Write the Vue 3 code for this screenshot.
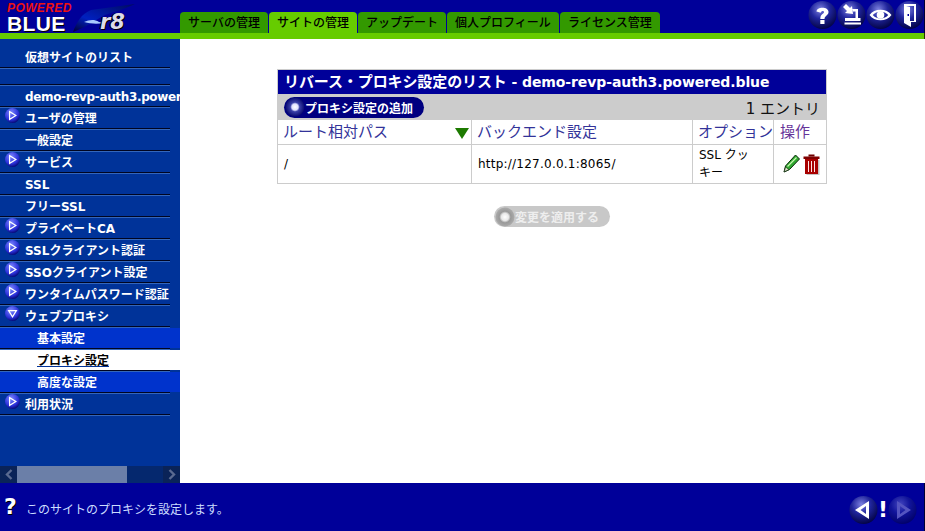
<script setup>
const rows = [
  { label: '仮想サイトのリスト', cls: 'first' },
  { label: '', cls: 'blank' },
  { label: 'demo-revp-auth3.powered.blue', cls: 'demo' },
  { label: 'ユーザの管理', arrow: 'r' },
  { label: '一般設定' },
  { label: 'サービス', arrow: 'r' },
  { label: 'SSL' },
  { label: 'フリーSSL' },
  { label: 'プライベートCA', arrow: 'r' },
  { label: 'SSLクライアント認証', arrow: 'r' },
  { label: 'SSOクライアント設定', arrow: 'r' },
  { label: 'ワンタイムパスワード認証', arrow: 'r' },
  { label: 'ウェブプロキシ', arrow: 'd' },
  { label: '基本設定', cls: 'sub' },
  { label: 'プロキシ設定', cls: 'sub sel' },
  { label: '高度な設定', cls: 'sub' },
  { label: '利用状況', arrow: 'r' },
]
const tabs = [
  { label: 'サーバの管理', w: 88 },
  { label: 'サイトの管理', w: 88, active: true },
  { label: 'アップデート', w: 88 },
  { label: '個人プロフィール', w: 112 },
  { label: 'ライセンス管理', w: 100 },
]
</script>

<template>
  <div class="page">
    <svg class="defs" width="0" height="0" aria-hidden="true">
      <defs>
        <radialGradient id="orb" cx="0.42" cy="0.3" r="0.75">
          <stop offset="0" stop-color="#7c80e0" />
          <stop offset="0.45" stop-color="#20259c" />
          <stop offset="1" stop-color="#00003c" />
        </radialGradient>
        <radialGradient id="mini" cx="0.4" cy="0.3" r="0.75">
          <stop offset="0" stop-color="#7c88ff" />
          <stop offset="0.65" stop-color="#2a30d8" />
          <stop offset="1" stop-color="#000066" />
        </radialGradient>
        <radialGradient id="btn" cx="0.5" cy="0.5" r="0.55">
          <stop offset="0" stop-color="#ffffff" />
          <stop offset="0.3" stop-color="#dfe0ff" />
          <stop offset="0.45" stop-color="#3a40a8" />
          <stop offset="1" stop-color="#000066" />
        </radialGradient>
        <radialGradient id="btnoff" cx="0.5" cy="0.5" r="0.55">
          <stop offset="0" stop-color="#ffffff" />
          <stop offset="0.35" stop-color="#e8e8e8" />
          <stop offset="0.55" stop-color="#999999" />
          <stop offset="1" stop-color="#b0b0b0" />
        </radialGradient>
        <linearGradient id="sw" x1="0" y1="1" x2="1" y2="0">
          <stop offset="0" stop-color="#000033" />
          <stop offset="0.35" stop-color="#0020c0" />
          <stop offset="1" stop-color="#000a60" />
        </linearGradient>
      </defs>
    </svg>

    <header class="top">
      <div class="logo">
        <div class="brand">
          <span class="powered">POWERED</span>
          <span class="blue">BLUE</span>
        </div>
        <svg class="swoosh" width="64" height="31" viewBox="0 0 64 31">
          <path d="M0 30 C4 20 8 12 18 8 L62 2 C50 8 40 10 32 13 C22 18 12 26 0 30Z" fill="url(#sw)" />
          <path d="M11 20 C16 18 21 17 26 20 L31 21 C25 22 18 22 11 20Z" fill="#a8c8ff" />
        </svg>
        <span class="r8">r8</span>
      </div>
      <nav class="tabs">
        <div v-for="t in tabs" :key="t.label" class="tab" :class="{ on: t.active }" :style="{ width: t.w + 'px' }">{{ t.label }}</div>
      </nav>
      <div class="tools">
        <svg width="29" height="30" viewBox="0 0 29 30">
          <circle cx="14.5" cy="15" r="14" fill="url(#orb)" />
          <path d="M8.5 11.5 C8.5 6.5 20.5 6 20.5 12 C20.5 15.5 16.5 15.5 16.5 19 H12.3 C12.3 13.5 16 14 16 12 C16 10.3 13 10.5 12.8 12.8Z" fill="#fff" />
          <rect x="12.3" y="20" width="4.2" height="4" fill="#fff" />
        </svg>
        <svg width="29" height="30" viewBox="0 0 29 30">
          <circle cx="14.5" cy="15" r="14" fill="url(#orb)" />
          <path d="M9 4 L13 8 L15 6 L16 14 L8 13 L10 11 L6 7Z" fill="#fff" />
          <path d="M15 9 H21 V18 H23.5 V21 H8 V18 H18.5 V11.5 H16Z" fill="#fff" />
          <rect x="7.5" y="22.5" width="16.5" height="2" fill="#fff" />
        </svg>
        <svg width="29" height="30" viewBox="0 0 29 30">
          <circle cx="14.5" cy="15" r="14" fill="url(#orb)" />
          <path d="M3.5 15 C8 8 21 8 25.5 15 C21 22 8 22 3.5 15Z M6.8 15 C10 19.5 19 19.5 22.2 15 C19 10.5 10 10.5 6.8 15Z" fill="#fff" fill-rule="evenodd" />
          <circle cx="14.5" cy="15" r="3.8" fill="#fff" />
        </svg>
        <svg width="29" height="30" viewBox="0 0 29 30">
          <circle cx="14.5" cy="15" r="14" fill="url(#orb)" />
          <path d="M9 4 H21 V22 H16 V27 L9 23Z M11 6 L15 7 V21 H19 V6Z" fill="#fff" fill-rule="evenodd" />
          <rect x="12.5" y="14" width="1.5" height="2" fill="#000099" />
        </svg>
      </div>
    </header>
    <div class="stripe"></div>

    <div class="main">
      <aside class="side">
        <div class="menu">
          <div v-for="(r, i) in rows" :key="i" class="row" :class="r.cls">
            <svg v-if="r.arrow" class="mini" width="15" height="15" viewBox="0 0 15 15">
              <circle cx="7.5" cy="7.5" r="7.5" fill="url(#mini)" />
              <path v-if="r.arrow === 'r'" d="M4 2.5 L12 7.5 L4 12.5Z M5.2 4.8 V10.2 L9.8 7.5Z" fill="#fff" fill-rule="evenodd" />
              <path v-else d="M2.5 4 H12.5 L7.5 12Z M4.8 5.2 L7.5 9.8 L10.2 5.2Z" fill="#fff" fill-rule="evenodd" />
            </svg>
            <span class="lbl">{{ r.label }}</span>
          </div>
        </div>
        <div class="scroll">
          <div class="sb"><svg width="8" height="11" viewBox="0 0 8 11"><path d="M6.5 1 L2 5.5 L6.5 10" fill="none" stroke="#5a6a90" stroke-width="2.4" /></svg></div>
          <div class="thumb"></div>
          <div class="track"></div>
          <div class="sb"><svg width="8" height="11" viewBox="0 0 8 11"><path d="M1.5 1 L6 5.5 L1.5 10" fill="none" stroke="#5a6a90" stroke-width="2.4" /></svg></div>
        </div>
      </aside>

      <main class="content">
        <div class="panel">
          <div class="title"><span class="jp">リバース・プロキシ設定のリスト</span> - demo-revp-auth3.powered.blue</div>
          <div class="bar">
            <button class="add">
              <svg width="20" height="20" viewBox="0 0 20 20"><circle cx="10" cy="10" r="9.5" fill="url(#btn)" /></svg>
              <span>プロキシ設定の追加</span>
            </button>
            <span class="count">1 エントリ</span>
          </div>
          <div class="grid">
            <div class="hd c1">
              <span>ルート相対パス</span>
              <svg width="14" height="11" viewBox="0 0 14 11"><path d="M0 0 H14 L7 11Z" fill="#1d7a00" /></svg>
            </div>
            <div class="hd">バックエンド設定</div>
            <div class="hd">オプション</div>
            <div class="hd op">操作</div>
            <div class="td">/</div>
            <div class="td url">http://127.0.0.1:8065/</div>
            <div class="td opt">SSL クッキー</div>
            <div class="td acts">
              <svg width="17" height="20" viewBox="0 0 17 20">
                <path d="M2 18 L5 16.5 L3 14.5Z" fill="#c8c8c8" />
                <path d="M12.5 1 L16.5 5 L6.5 15.5 L1 18 L2.5 12Z" fill="#30a830" stroke="#082808" stroke-width="1" />
                <path d="M4.5 12.5 L13.5 3.5" stroke="#c8f8b0" stroke-width="1.3" />
                <path d="M1.2 17.8 L2.6 13 L6 15.6Z" fill="#e8e8d0" stroke="#082808" stroke-width="0.6" />
              </svg>
              <svg width="17" height="21" viewBox="0 0 17 21">
                <rect x="3.5" y="6" width="13" height="15" fill="#c4c4c4" />
                <rect x="2" y="5" width="13" height="15" fill="#a80000" />
                <rect x="0.5" y="2.5" width="16" height="2.5" fill="#800000" />
                <rect x="5.5" y="0.5" width="6" height="2" fill="#700000" />
                <path d="M5.5 7 V18 M8.5 7 V18 M11.5 7 V18" stroke="#ffe4e4" stroke-width="1" />
              </svg>
            </div>
          </div>
        </div>
        <div class="apply">
          <svg width="20" height="20" viewBox="0 0 20 20"><circle cx="10" cy="10" r="9.5" fill="url(#btnoff)" /></svg>
          <span>変更を適用する</span>
        </div>
      </main>
    </div>

    <footer class="foot">
      <span class="q">?</span>
      <span class="msg">このサイトのプロキシを設定します。</span>
      <div class="nav">
        <svg width="29" height="30" viewBox="0 0 29 30">
          <circle cx="14.5" cy="15" r="14" fill="url(#orb)" />
          <path d="M20 6 V24 L6 15Z M17 11 L11.5 15 L17 19Z" fill="#fff" fill-rule="evenodd" />
        </svg>
        <span class="bang">!</span>
        <svg width="29" height="30" viewBox="0 0 29 30" opacity="0.55">
          <circle cx="14.5" cy="15" r="14" fill="url(#orb)" />
          <path d="M9 6 V24 L23 15Z M12 11 L17.5 15 L12 19Z" fill="#9a9ae0" fill-rule="evenodd" />
        </svg>
      </div>
    </footer>
  </div>
</template>

<style>
html, body { margin: 0; padding: 0; }
</style>

<style scoped>
.page {
  width: 925px; height: 531px; display: flex; flex-direction: column; overflow: hidden; background: #fff;
  font-family: "DejaVu Sans", "Noto Sans CJK JP", sans-serif; font-size: 12px;
}
.defs { position: absolute; }
.top { height: 33px; background: #000099; display: flex; flex: none; box-sizing: border-box; border-right: 1px solid #000033; }
.logo { width: 180px; flex: none; position: relative; display: flex; align-items: flex-start; }
.brand { margin-left: 7px; display: flex; flex-direction: column; width: 66px; flex: none; padding-top: 2px; }
.powered { color: #ee1111; font: italic bold 12px/13px "Liberation Sans", sans-serif; letter-spacing: 0.4px; }
.blue { color: #fff; font: bold 21px/18px "Liberation Sans", sans-serif; letter-spacing: 0.4px; text-shadow: 1px 1px 0 #000; }
.swoosh { margin-top: 2px; flex: none; }
.r8 { position: absolute; left: 100px; top: 12px; color: #dcdce8; font: italic bold 21px/20px "DejaVu Sans", sans-serif; text-shadow: 1px 1px 0 #000, -1px 0 0 #000; }
.tabs { display: flex; gap: 1px; align-items: flex-end; }
.tab { height: 21px; line-height: 22px; text-align: center; background: #339900; color: #000; border-radius: 4px 4px 0 0; font-weight: 500; }
.tab.on { background: #66cc00; }
.tools { margin-left: auto; display: flex; align-items: flex-start; }
.stripe { height: 6px; background: #66cc00; flex: none; box-sizing: border-box; border-right: 1px solid #223300; }
.main { flex: 1; display: flex; min-height: 0; }
.side { width: 180px; flex: none; background: #003399; display: flex; flex-direction: column; }
.menu { flex: 1; overflow: hidden; }
.row { height: 22px; position: relative; color: #fff; font-weight: 700; line-height: 22px; white-space: nowrap; box-sizing: border-box; padding-left: 25px; overflow: hidden; }
.row::after { content: ""; position: absolute; left: 0; bottom: 0; width: 170px; height: 2px; background: linear-gradient(#000520 50%, #3366bb 50%); }
.row.first { height: 30px; line-height: 38px; }
.row.blank { height: 17px; }
.row.demo { letter-spacing: -0.35px; }
.mini { position: absolute; left: 5px; top: 0; }
.row.sub { padding-left: 37px; background: linear-gradient(#0033cc calc(100% - 2px), #003399 calc(100% - 2px)); }
.row.sel { background: linear-gradient(#fff calc(100% - 2px), #003399 calc(100% - 2px)); color: #000; }
.row.sel .lbl { text-decoration: underline; text-decoration-color: #003399; }
.scroll { height: 17px; flex: none; display: flex; background: #05286e; }
.sb { width: 17px; background: #0a2358; display: flex; align-items: center; justify-content: center; flex: none; }
.thumb { width: 110px; background: #6b7fa8; flex: none; }
.track { flex: 1; }
.content { flex: 1; display: flex; flex-direction: column; align-items: center; padding: 30px 98px 0 97px; box-sizing: border-box; min-width: 0; }
.panel { width: 550px; border: 1px solid #ccc; box-sizing: border-box; flex: none; }
.title { height: 24px; line-height: 24px; background: #000099; color: #fff; font-weight: 700; font-size: 14px; letter-spacing: -0.1px; padding-left: 6px; white-space: nowrap; overflow: hidden; }
.title .jp { font-size: 15px; }
.bar { height: 26px; background: #ccc; display: flex; align-items: center; justify-content: space-between; padding: 0 6px; box-sizing: border-box; }
.add { height: 21px; width: 140px; border: 0; padding: 0 0 0 1px; border-radius: 11px; background: #000080; color: #fff; display: flex; align-items: center; font: inherit; font-weight: 700; box-sizing: border-box; }
.count { font-size: 15px; color: #111; }
.grid { display: grid; grid-template-columns: 193px 220px 80px 52px; grid-template-rows: 24px 38px; background: #ccc; gap: 1px; }
.hd { background: #fff; color: #333399; font-size: 15px; line-height: 23px; padding-left: 5px; white-space: nowrap; display: flex; align-items: center; justify-content: space-between; }
.hd.c1 svg { margin: 2px 2px 0 0; }
.hd.op { color: #663399; padding-left: 6px; }
.td { background: #fff; color: #000; display: flex; align-items: center; padding-left: 6px; }
.td.url { letter-spacing: 0.23px; }
.td.opt { line-height: 18px; padding-right: 18px; }
.acts { gap: 3px; padding-left: 9px; }
.apply { margin-top: 22px; width: 116px; height: 21px; border-radius: 11px; background: #c8c8c8; color: #eee; font-weight: 700; display: flex; align-items: center; flex: none; padding-left: 1px; box-sizing: border-box; }
.foot { height: 48px; background: #000099; flex: none; display: flex; align-items: center; box-sizing: border-box; border-right: 1px solid #000033; }
.q { color: #fff; font: bold 22px/22px "DejaVu Sans", sans-serif; margin-left: 4px; width: 22px; text-shadow: 1px 1px 0 #000; }
.msg { color: #ccddff; margin-top: 2px; }
.nav { margin-left: auto; display: flex; align-items: center; padding-right: 7px; margin-top: 6px; }
.bang { color: #fff; font: bold 22px/22px "DejaVu Sans", sans-serif; width: 10px; text-align: center; }
</style>
